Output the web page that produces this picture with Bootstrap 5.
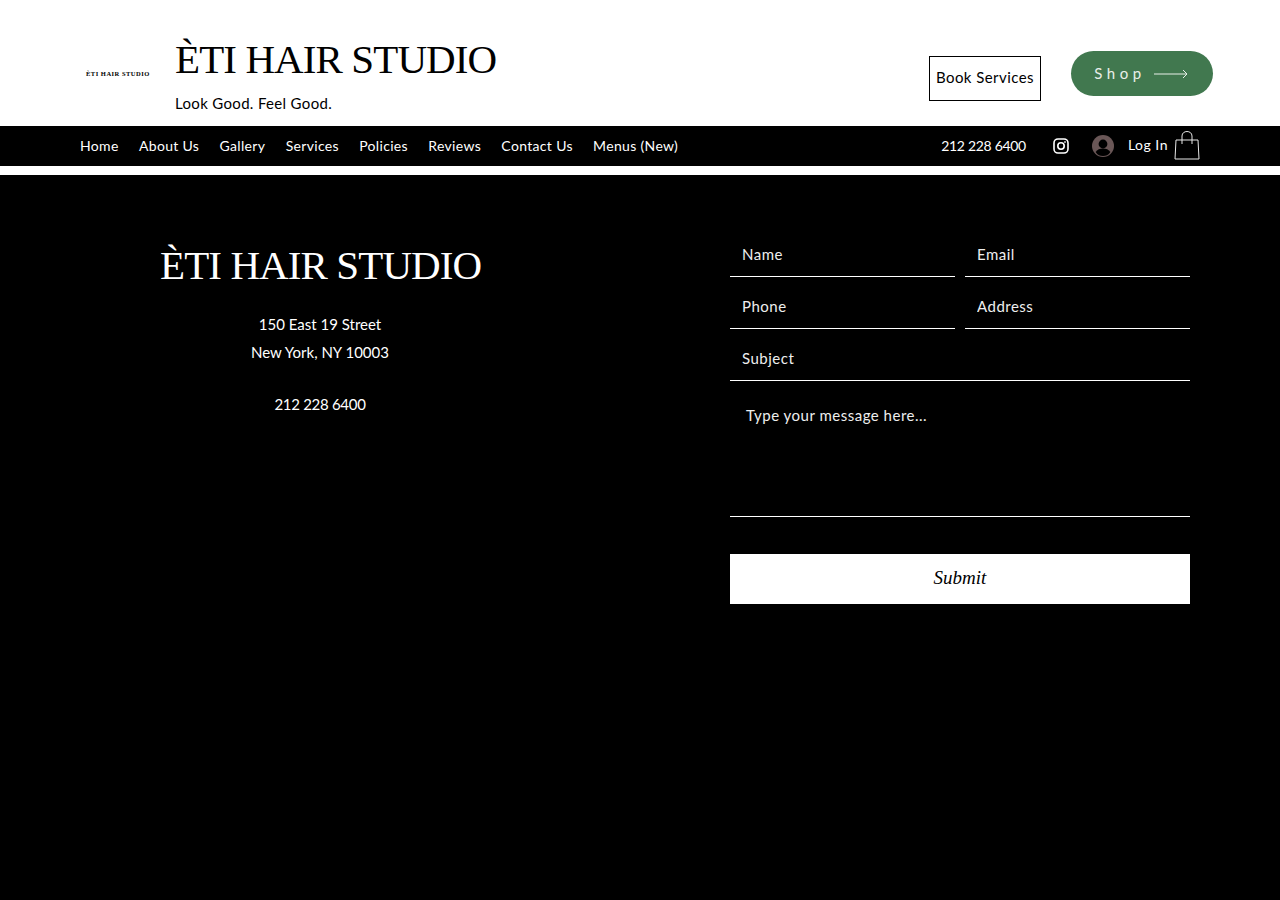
<!DOCTYPE html>
<html lang="en">
<head>
    <meta charset="UTF-8">
    <meta name="viewport" content="width=device-width, initial-scale=1">
    <title>Èti Hair Studio</title>
    <link href="https://cdn.jsdelivr.net/npm/bootstrap@5.3.0/dist/css/bootstrap.min.css" rel="stylesheet">
    <style>
        body {
            background-color: #fff;
            font-family: 'Lato', 'Liberation Sans', sans-serif;
            font-size: 15px;
            color: #000;
            min-height: 900px;
        }
        .site-header {
            height: 126px;
            padding-left: 86px;
            padding-right: 67px;
        }
        .logo-box {
            width: 89px;
            font-family: 'Liberation Serif', serif;
            font-size: 6.5px;
            line-height: 10px;
            font-weight: 700;
            letter-spacing: 0.5px;
            white-space: nowrap;
            margin-top: 69px;
        }
        .brand-block {
            margin-top: 33px;
        }
        .brand-title {
            font-family: 'Liberation Serif', serif;
            font-size: 41px;
            font-weight: 400;
            letter-spacing: -0.9px;
            line-height: 52px;
            margin: 0;
            white-space: nowrap;
        }
        .brand-tag {
            font-size: 15px;
            letter-spacing: 0.33px;
            line-height: 20px;
            margin: 8px 0 0;
        }
        .btn-book {
            width: 112px;
            height: 45px;
            padding: 0 0 2px;
            border: 1px solid #000;
            border-radius: 0;
            background: #fff;
            color: #000;
            font-size: 15px;
            letter-spacing: 0.45px;
            margin-top: 56px;
            margin-right: 30px;
        }
        .btn-shop {
            width: 142px;
            height: 45px;
            padding: 0 2px 0 0;
            border: 0;
            border-radius: 23px;
            background: #41784f;
            color: #e9efe9;
            font-size: 15px;
            letter-spacing: 4.6px;
            margin-top: 51px;
        }
        .site-nav {
            height: 40px;
            background: #000;
            padding: 0 80px 2px;
            margin-bottom: 9px;
            color: #fff;
            font-size: 14px;
        }
        .site-nav .nav-link {
            color: #fff;
            padding: 0;
            margin-right: 20.3px;
            font-size: 14px;
            letter-spacing: 0.33px;
        }
        .nav-phone {
            letter-spacing: -0.3px;
            margin-right: 27px;
        }
        .nav-icon {
            margin-top: 2px;
        }
        .avatar {
            margin-left: 23px;
        }
        .nav-login {
            letter-spacing: 0.5px;
            margin-left: 14px;
            margin-right: 6px;
            margin-top: -2px;
        }
        .contact {
            background: #000;
            color: #fff;
            height: 725px;
            padding-left: 160px;
            padding-right: 90px;
            padding-top: 64px;
        }
        .contact-info {
            width: 320px;
            text-align: center;
        }
        .contact-info h2 {
            font-family: 'Liberation Serif', serif;
            font-size: 41px;
            font-weight: 400;
            letter-spacing: -0.9px;
            line-height: 52px;
            margin: 0 0 19px;
            white-space: nowrap;
        }
        .contact-info p {
            margin: 0;
            line-height: 28px;
        }
        .contact-info .info-phone {
            letter-spacing: -0.3px;
        }
        .contact-form {
            width: 460px;
            margin-top: -4px;
        }
        .contact-form .form-control {
            background: transparent;
            border: 0;
            border-bottom: 1px solid #fff;
            border-radius: 0;
            color: #fff;
            font-size: 15px;
            height: 42px;
            padding: 0 12px 4px;
            box-shadow: none;
        }
        .contact-form .form-control::placeholder {
            color: #eee;
            opacity: 1;
            letter-spacing: 0.5px;
        }
        .contact-form textarea.form-control {
            height: 126px;
            padding: 13px 16px;
            resize: none;
        }
        .field-row {
            column-gap: 10px;
            margin-bottom: 10px;
        }
        .btn-submit {
            width: 100%;
            height: 50px;
            margin-top: 37px;
            padding-bottom: 8px;
            background: #fff;
            border: 0;
            border-radius: 0;
            color: #000;
            font-family: 'Liberation Serif', serif;
            font-style: italic;
            font-size: 19px;
        }
    </style>
</head>
<body>
    <header class="site-header d-flex align-items-start">
        <div class="logo-box">ÈTI HAIR STUDIO</div>
        <div class="brand-block">
            <h1 class="brand-title">ÈTI HAIR STUDIO</h1>
            <p class="brand-tag">Look Good. Feel Good.</p>
        </div>
        <button class="btn btn-book ms-auto">Book Services</button>
        <button class="btn btn-shop d-flex align-items-center justify-content-center gap-2">
            Shop
            <svg width="34" height="10" viewBox="0 0 34 10" fill="none" stroke="#e9efe9" stroke-width="1"><path d="M0 5H33M29 1l4 4-4 4"/></svg>
        </button>
    </header>

    <nav class="site-nav d-flex align-items-center">
        <a class="nav-link" href="#">Home</a>
        <a class="nav-link" href="#">About Us</a>
        <a class="nav-link" href="#">Gallery</a>
        <a class="nav-link" href="#">Services</a>
        <a class="nav-link" href="#">Policies</a>
        <a class="nav-link" href="#">Reviews</a>
        <a class="nav-link" href="#">Contact Us</a>
        <a class="nav-link" href="#">Menus (New)</a>
        <span class="nav-phone ms-auto">212 228 6400</span>
        <svg class="nav-icon" width="16" height="16" viewBox="0 0 16 16" fill="none" stroke="#fff" stroke-width="1.6"><rect x="1" y="1" width="14" height="14" rx="4"/><circle cx="8" cy="8" r="3.2"/><circle cx="12" cy="4" r=".6" fill="#fff" stroke-width=".6"/></svg>
        <svg class="nav-icon avatar" width="22" height="22" viewBox="0 0 22 22"><circle cx="11" cy="11" r="11" fill="#6a5757"/><circle cx="11" cy="9" r="4.400" fill="#000"/><path d="M3.6 17c1.6-2.6 4.4-3.6 7.4-3.6s5.800 1 7.400 3.600C16.500 20 14 21 11 21s-5.500-1-7.400-4z" fill="#000"/></svg>
        <span class="nav-login">Log In</span>
        <svg width="26" height="30" viewBox="0 0 26 30" fill="none" stroke="#e8e8e8" stroke-width="1"><path d="M2 10h22l1 19H1z"/><path d="M8 14V6c0-6 10-6 10 0v8"/></svg>
    </nav>

    <section class="contact d-flex justify-content-between align-items-start">
        <div class="contact-info">
            <h2>ÈTI HAIR STUDIO</h2>
            <p>150 East 19 Street</p>
            <p>New York, NY 10003</p>
            <p class="info-phone mt-4">212 228 6400</p>
        </div>
        <form class="contact-form">
            <div class="d-flex field-row">
                <input class="form-control" type="text" placeholder="Name">
                <input class="form-control" type="email" placeholder="Email">
            </div>
            <div class="d-flex field-row">
                <input class="form-control" type="text" placeholder="Phone">
                <input class="form-control" type="text" placeholder="Address">
            </div>
            <div class="d-flex field-row">
                <input class="form-control" type="text" placeholder="Subject">
            </div>
            <textarea class="form-control" placeholder="Type your message here..."></textarea>
            <button class="btn btn-submit" type="button">Submit</button>
        </form>
    </section>
    <script src="https://cdn.jsdelivr.net/npm/bootstrap@5.3.0/dist/js/bootstrap.bundle.min.js"></script>
</body>
</html>
